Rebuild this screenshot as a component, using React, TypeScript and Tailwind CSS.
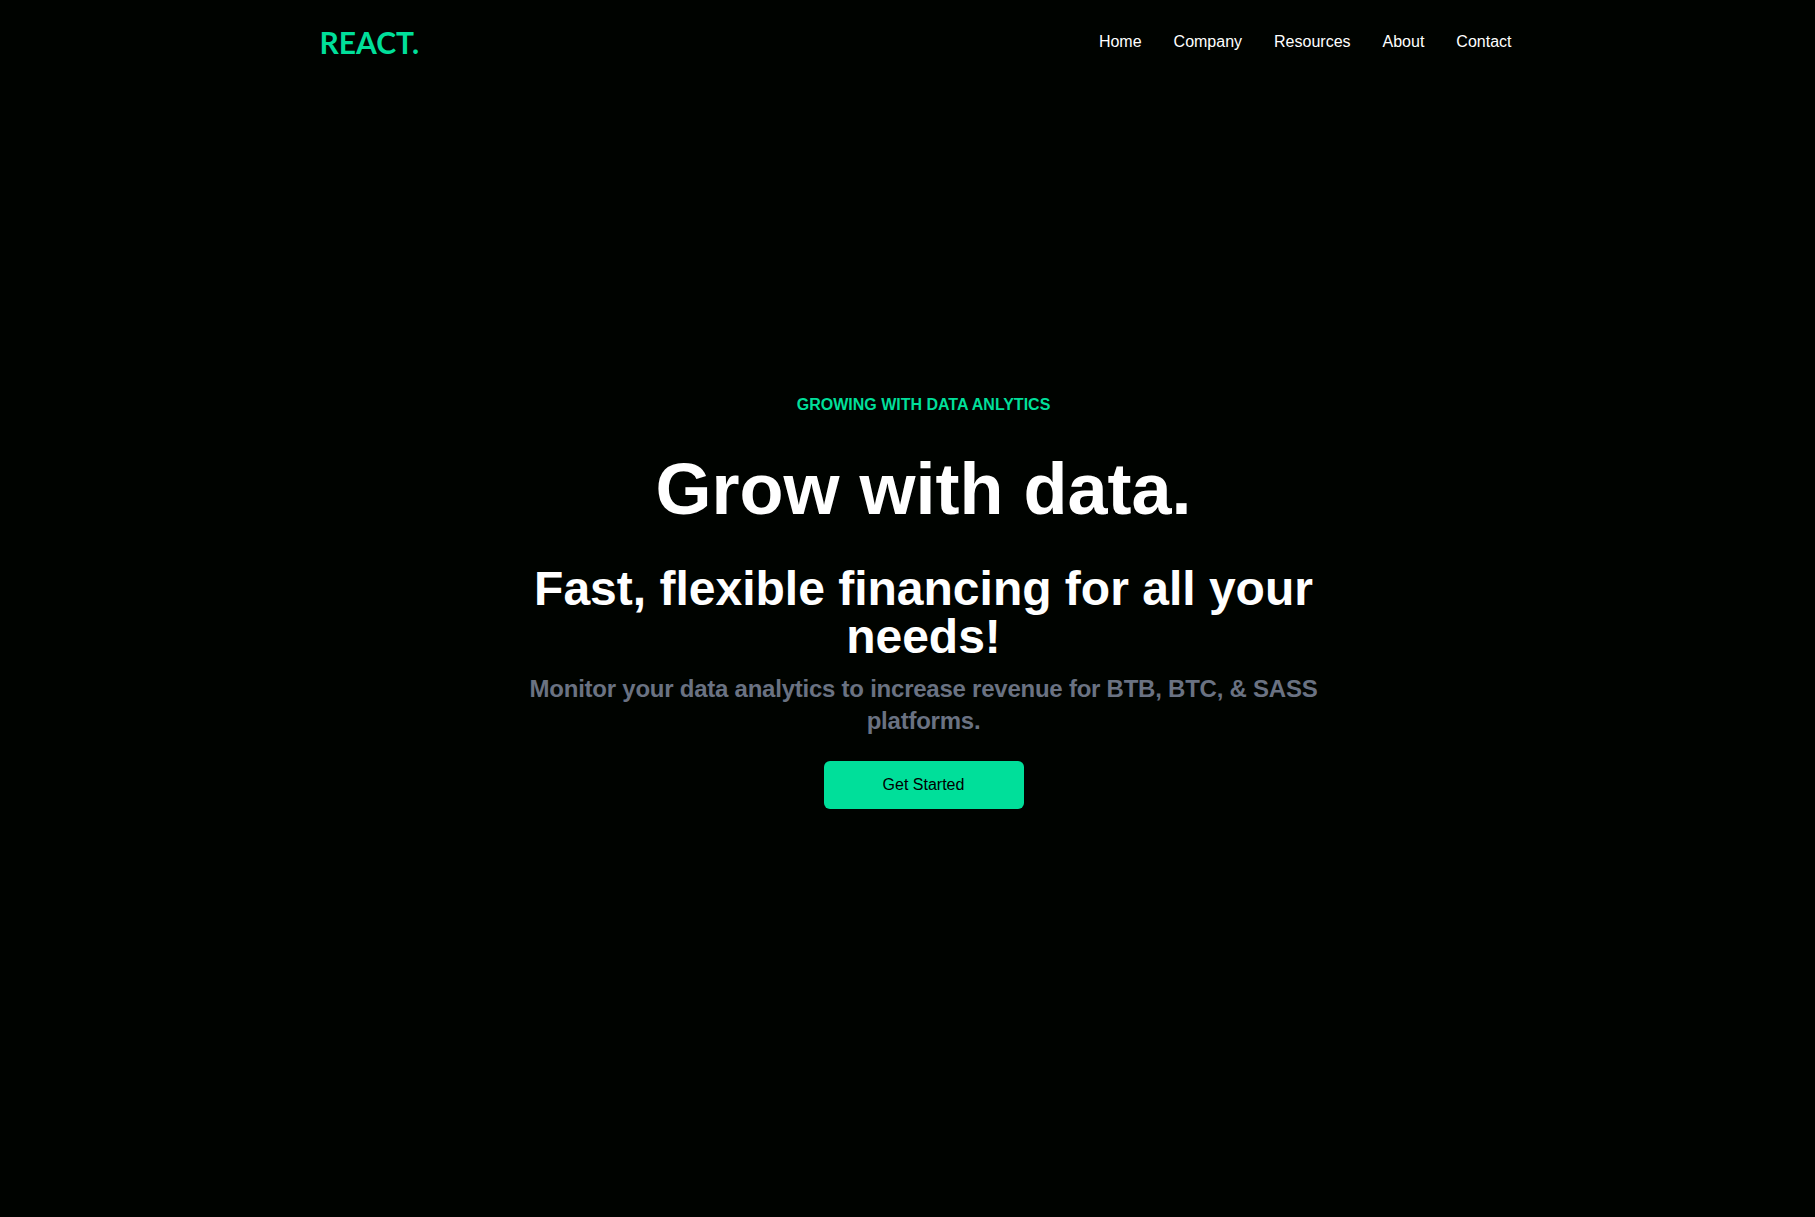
const links = ['Home', 'Company', 'Resources', 'About', 'Contact'];

function Navbar() {
  return (
    <div className="flex justify-between items-center h-20 pt-1 max-w-[1240px] mx-auto px-4 text-white">
      <h1 className="w-full text-3xl font-bold text-[#00df9a] font-['Lato',sans-serif]">REACT.</h1>
      <ul className="flex">
        {links.map((l) => (
          <li key={l} className="p-4 whitespace-nowrap">
            {l}
          </li>
        ))}
      </ul>
    </div>
  );
}

function Hero() {
  return (
    <div className="text-white">
      <div className="max-w-[800px] -mt-20 w-full h-screen mx-auto text-center flex flex-col justify-center">
        <p className="text-[#00df9a] font-bold p-2">GROWING WITH DATA ANLYTICS</p>
        <h1 className="text-7xl font-bold pt-7 pb-5">Grow with data.</h1>
        <h2 className="text-5xl font-bold pt-5 pb-3">Fast, flexible financing for all your needs!</h2>
        <p className="text-2xl font-bold text-gray-500 tracking-[-0.01em]">
          Monitor your data analytics to increase revenue for BTB, BTC, &amp; SASS platforms.
        </p>
        <button className="bg-[#00df9a] w-[200px] rounded-md font-medium my-6 mx-auto py-3 text-black">
          Get Started
        </button>
      </div>
    </div>
  );
}

export default function App() {
  return (
    <div className="min-h-screen pl-8 bg-[#000300] font-['Liberation_Sans',sans-serif]">
      <Navbar />
      <Hero />
    </div>
  );
}
